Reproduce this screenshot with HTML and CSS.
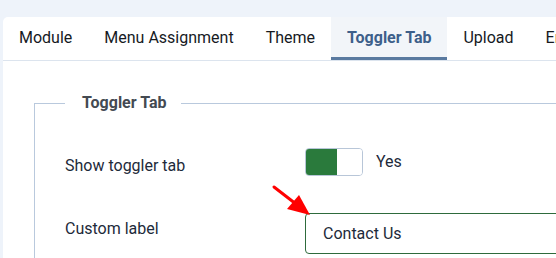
FILE: index.html
```html
<!DOCTYPE html>
<html>
<head>
<meta charset="utf-8">
<link rel="stylesheet" href="styles.css">
</head>
<body>
<div class="panel">
  <nav class="tabs">
    <span class="tab">Module</span>
    <span class="tab">Menu Assignment</span>
    <span class="tab">Theme</span>
    <span class="tab active">Toggler Tab</span>
    <span class="tab">Upload</span>
    <span class="tab">Email</span>
  </nav>
  <div class="content">
    <fieldset class="group">
      <legend class="legend">Toggler Tab</legend>
      <div class="row row-toggle">
        <label class="label">Show toggler tab</label>
        <div class="control">
          <span class="switch"><span class="switch-on"></span><span class="switch-off"></span></span>
          <span class="switch-text">Yes</span>
        </div>
      </div>
      <div class="row row-input">
        <label class="label">Custom label</label>
        <div class="control">
          <div class="input">Contact Us</div>
        </div>
      </div>
    </fieldset>
  </div>
</div>
<svg class="arrow" width="556" height="258" viewBox="0 0 556 258">
  <line x1="274" y1="187" x2="296" y2="204" stroke="#ff0000" stroke-width="3" stroke-linecap="round"/>
  <polygon points="310,215 287,209 299,195" fill="#ff0000"/>
</svg>
</body>
</html>
```
FILE: styles.css
```css
html, body {
  margin: 0;
  padding: 0;
}
body {
  background: #eef3fa;
  font-family: Roboto, "Liberation Sans", sans-serif;
  width: 556px;
  height: 258px;
  overflow: hidden;
  position: relative;
  padding: 17px 0 0 3px;
  box-sizing: border-box;
}
.panel {
  background: #ffffff;
  border-top-left-radius: 5px;
  width: 553px;
  height: 241px;
  overflow: hidden;
}
.tabs {
  display: flex;
  height: 43px;
  border-bottom: 1px solid #dce4ee;
  white-space: nowrap;
  overflow: hidden;
}
.tab {
  display: flex;
  align-items: center;
  padding: 0 16px;
  font-size: 16px;
  color: #161a1f;
  box-sizing: border-box;
  border-bottom: 3px solid transparent;
  flex-shrink: 0;
}
.tab.active {
  background: #f2f5f9;
  color: #3d5f8a;
  font-weight: 700;
  border-bottom-color: #5a7aa0;
}
.content {
  padding: 33px 0 0 31px;
}
.group {
  margin: 0;
  border: 1px solid #b9c9dd;
  border-right: none;
  border-bottom: none;
  padding: 31px 0 0 30px;
  width: 560px;
  height: 200px;
}
.legend {
  margin-left: 0;
  padding: 0 15px 0 17px;
  font-size: 16px;
  font-weight: 700;
  color: #444a52;
  line-height: 18px;
}
.row {
  display: grid;
  grid-template-columns: 240px 300px;
}
.label {
  font-size: 16px;
  line-height: 19px;
  color: #1d2a3a;
}
.control {
  display: flex;
  align-items: center;
}
.row-toggle {
  height: 47px;
}
.row-toggle .label {
  padding-top: 13px;
}
.row-toggle .control {
  align-items: flex-start;
  padding-top: 5px;
}
.switch {
  display: flex;
  width: 58px;
  height: 28px;
  box-sizing: border-box;
  border: 1px solid #b8c6d8;
  border-radius: 4px;
  overflow: hidden;
}
.switch-on {
  width: 31px;
  background: #2a7a3c;
}
.switch-off {
  flex: 1;
  background: #ffffff;
}
.switch-text {
  margin-left: 13px;
  font-size: 16px;
  color: #1d2a3a;
  line-height: 28px;
}
.row-input {
  margin-top: 23px;
}
.row-input .label {
  padding-top: 6px;
}
.input {
  width: 300px;
  height: 41px;
  box-sizing: border-box;
  border: 1px solid #2e6b3c;
  border-radius: 4px;
  padding: 0 17px;
  display: flex;
  align-items: center;
  font-size: 16px;
  color: #1d2a3a;
}
.arrow {
  position: absolute;
  left: 0;
  top: 0;
  pointer-events: none;
}
```
